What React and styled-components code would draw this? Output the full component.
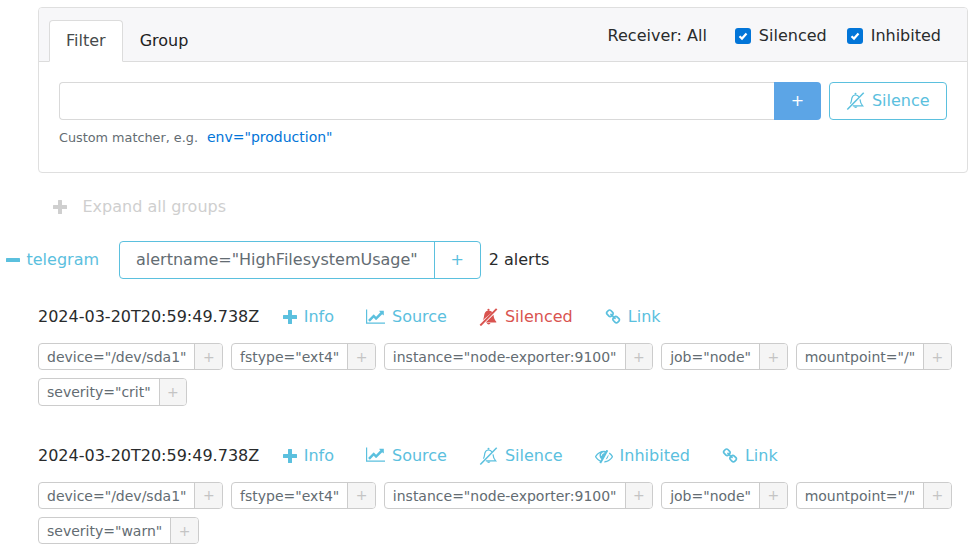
import React from 'react';
import styled, { createGlobalStyle } from 'styled-components';

const GlobalStyle = createGlobalStyle`
  html, body {
    margin: 0;
    padding: 0;
    background: #fff;
    font-family: "DejaVu Sans", sans-serif;
    font-size: 16px;
    line-height: 24px;
    color: #292b2c;
  }
`;

const PlusIcon = ({ size = 14 }) => (
  <svg width={size} height={size} viewBox="0 0 14 14" fill="currentColor">
    <path d="M5.6 0h2.8q.6 0 .6.6V5h4.4q.6 0 .6.6v2.8q0 .6-.6.6H9v4.4q0 .6-.6.6H5.6q-.6 0-.6-.6V9H.6Q0 9 0 8.4V5.6Q0 5 .6 5H5V.6q0-.6.6-.6z" />
  </svg>
);

const MinusIcon = () => (
  <svg width="14" height="14" viewBox="0 0 14 14" fill="currentColor">
    <rect x="0" y="5" width="14" height="4" rx="0.6" />
  </svg>
);

const LineChartIcon = () => (
  <svg width="19" height="17" viewBox="0 90 2048 1792" fill="currentColor">
    <path d="M2048 1536v128h-2048v-1536h128v1408h1920zm-128-1248v435q0 21-19.5 29.5t-35.5-7.5l-121-121-633 633q-10 10-23 10t-23-10l-233-233-416 416-192-192 585-585q10-10 23-10t23 10l233 233 464-464-121-121q-16-16-7.5-35.5t29.5-19.5h435q14 0 23 9t9 23z" />
  </svg>
);

const LinkIcon = () => (
  <svg width="16" height="16" viewBox="0 0 1792 1792" fill="currentColor">
    <path d="M1520 1216q0-40-28-68l-208-208q-28-28-68-28-42 0-72 32 3 3 19 18.5t21.5 21.5 15 19 13 25.5 3.5 27.5q0 40-28 68t-68 28q-15 0-27.5-3.5t-25.5-13-19-15-21.5-21.5-18.5-19q-33 31-33 73 0 40 28 68l206 207q27 27 68 27 40 0 68-26l147-146q28-28 28-67zm-703-705q0-40-28-68l-206-207q-28-28-68-28-39 0-68 27l-147 146q-28 28-28 67 0 40 28 68l208 208q27 27 68 27 42 0 72-31-3-3-19-18.5t-21.5-21.5-15-19-13-25.5-3.5-27.5q0-40 28-68t68-28q15 0 27.5 3.5t25.5 13 19 15 21.5 21.5 18.5 19q33-31 33-73zm895 705q0 120-85 203l-147 146q-83 83-203 83-121 0-204-85l-206-207q-83-83-83-203 0-123 88-209l-88-88q-86 88-208 88-120 0-204-84l-208-208q-84-84-84-204t85-203l147-146q83-83 203-83 121 0 204 85l206 207q83 83 83 203 0 123-88 209l88 88q86-88 208-88 120 0 204 84l208 208q84 84 84 204z" />
  </svg>
);

const EyeSlashIcon = () => (
  <svg width="18" height="18" viewBox="0 0 1792 1792" fill="currentColor">
    <path d="M555 1335l78-141q-87-63-136-159t-49-203q0-121 61-225-229 117-381 353 167 258 427 375zm389-759q0-20-14-34t-34-14q-125 0-214.5 89.5t-89.5 214.5q0 20 14 34t34 14 34-14 14-34q0-86 61-147t147-61q20 0 34-14t14-34zm363-191q0 7-1 9-106 189-316 567t-315 566l-49 89q-10 16-28 16-12 0-134-70-16-10-16-28 0-12 44-87-143-65-263.5-173t-208.5-245q-20-31-20-69t20-69q153-235 380-371t496-136q89 0 180 17l54-97q10-16 28-16 5 0 18 6t31 15.5 33 19.5 31.5 18.5 19.5 11.5q16 10 16 27zm37 447q0 139-79 253.5t-209 164.5l280-502q8 45 8 84zm448 128q0 35-20 69-39 64-109 145-150 172-347.5 267t-419.5 95l74-132q212-18 392.5-137t301.5-307q-115-179-282-294l63-112q95 64 182.5 153t144.5 184q20 34 20 69z" />
  </svg>
);

const BellSlashOutline = () => (
  <svg width="19" height="18" viewBox="0 0 18 18" fill="none" stroke="currentColor">
    <path strokeWidth="1.2" d="M3.9 11.6C5.2 9.8 4.8 7.8 5.5 5.8 6.1 4 7.6 3 9 3c1.3 0 2.6.6 3.4 1.8" />
    <path strokeWidth="1.2" d="M13.5 7.4c.2 2.6 1 4.7 2.7 6.5H6.3" />
    <path strokeWidth="1.5" d="M.8 17.5 17.2.8" />
    <path fill="currentColor" stroke="none" d="M7.3 14.5H11a1.900 1.900 0 0 1-3.700 0z" />
    <circle cx="9" cy="1.800" r="1" fill="currentColor" stroke="none" />
  </svg>
);

const BellSlashSolid = () => (
  <svg width="19" height="18" viewBox="0 0 18 18" fill="currentColor">
    <path d="M3.2 12.2C4.800 10 4.300 7.800 5.100 5.600 5.800 3.700 7.400 2.500 9 2.500c1.500 0 2.900.7 3.800 1.800z" />
    <path d="M14 6.800c.2 2.700 1 5 2.800 6.900v.8H6.200z" />
    <path d="M7.300 15H11a1.900 1.900 0 0 1-3.700 0z" />
    <circle cx="9" cy="1.800" r="1.100" />
    <path stroke="currentColor" strokeWidth="1.900" d="M.8 17.500 17.200.8" />
  </svg>
);

const CheckMark = () => (
  <svg width="10" height="10" viewBox="0 0 10 10" fill="none" stroke="#fff" strokeWidth="2.200">
    <path d="M1.500 5.200 4 7.600 8.500 2.600" />
  </svg>
);

const Page = styled.div`
  width: 974px;
  height: 560px;
  overflow: hidden;
  padding: 7px 6px 0 38px;
  box-sizing: border-box;
`;

const Card = styled.div`
  border: 1px solid #dfdfdf;
  border-radius: 4px;
  height: 166px;
  box-sizing: border-box;
`;

const CardHeader = styled.div`
  display: flex;
  align-items: flex-end;
  justify-content: space-between;
  height: 54px;
  box-sizing: border-box;
  padding: 0 26px 0 10px;
  background: #f7f7f9;
  border-bottom: 1px solid #dcdcdc;
  border-radius: 3px 3px 0 0;
`;

const Tabs = styled.div`
  display: flex;
  margin-bottom: -1px;
`;

const Tab = styled.div`
  padding: 8px 16px;
  height: 42px;
  box-sizing: border-box;
  border: 1px solid ${p => (p.$active ? '#dcdcdc' : 'transparent')};
  border-bottom-color: ${p => (p.$active ? '#fff' : 'transparent')};
  border-radius: 4px 4px 0 0;
  background: ${p => (p.$active ? '#fff' : 'transparent')};
  color: ${p => (p.$active ? '#464a4c' : '#1e2122')};
`;

const HeaderRight = styled.div`
  display: flex;
  align-items: center;
  align-self: flex-start;
  margin-top: 16px;
  color: #292b2c;
`;

const Receiver = styled.span`
  margin-right: 28px;
`;

const Check = styled.label`
  display: flex;
  align-items: center;
  margin-left: ${p => (p.$first ? '0' : '20px')};
`;

const CheckBox = styled.span`
  display: inline-flex;
  align-items: center;
  justify-content: center;
  width: 16px;
  height: 16px;
  margin-right: 8px;
  border-radius: 3px;
  background: #0275d8;
`;

const CardBody = styled.div`
  padding: 20px;
`;

const FilterRow = styled.div`
  display: flex;
`;

const FilterInput = styled.div`
  width: 715px;
  height: 38px;
  box-sizing: border-box;
  border: 1px solid #d9d9d9;
  border-right: 0;
  border-radius: 4px 0 0 4px;
`;

const AddButton = styled.div`
  display: flex;
  align-items: center;
  justify-content: center;
  width: 47px;
  height: 38px;
  border-radius: 0 4px 4px 0;
  background: #5ca5e6;
  color: #fff;
  font-size: 16px;
`;

const SilenceButton = styled.div`
  display: flex;
  align-items: center;
  justify-content: center;
  gap: 6.5px;
  width: 118px;
  height: 38px;
  margin-left: 8px;
  box-sizing: border-box;
  border: 1px solid #5bc0de;
  border-radius: 4px;
  color: #5bc0de;
`;

const Helper = styled.div`
  margin-top: 5px;
  font-size: 12.8px;
  line-height: 24px;
  color: #636c72;
`;

const HelperLink = styled.span`
  margin-left: 9px;
  font-size: 14px;
  color: #0275d8;
`;

const ExpandAll = styled.div`
  display: flex;
  align-items: center;
  gap: 15.5px;
  margin: 22px 0 0 15px;
  color: #cfcfcf;
`;

const GroupRow = styled.div`
  display: flex;
  align-items: center;
  margin: 22px 0 0 -32px;
`;

const GroupName = styled.div`
  display: flex;
  align-items: center;
  gap: 6.5px;
  width: 113px;
  color: #5bc0de;
`;

const GroupFilter = styled.div`
  display: flex;
  height: 38px;
  box-sizing: border-box;
  border: 1px solid #5bc0de;
  border-radius: 4px;
  color: #636c72;
  line-height: 36px;
`;

const GroupLabel = styled.span`
  padding: 0 16px;
  border-right: 1px solid #5bc0de;
`;

const GroupPlus = styled.span`
  display: flex;
  align-items: center;
  justify-content: center;
  width: 45px;
  color: #5bc0de;
  font-size: 16px;
`;

const AlertCount = styled.span`
  margin-left: 8px;
`;

const Alert = styled.div`
  margin-top: ${p => (p.$first ? '26px' : '37.8px')};
`;

const AlertHead = styled.div`
  display: flex;
  align-items: center;
  height: 24px;
`;

const Timestamp = styled.span`
  margin-right: 12px;
`;

const Action = styled.span`
  display: flex;
  align-items: center;
  gap: 6.5px;
  padding: 0 12.5px 0 12px;
  margin-right: 8px;
  color: ${p => (p.$danger ? '#d9534f' : '#5bc0de')};
`;

const Labels = styled.div`
  display: flex;
  flex-wrap: wrap;
  gap: 8px;
  margin-top: 14px;
`;

const Label = styled.div`
  display: flex;
  height: 27.4px;
  box-sizing: border-box;
  border: 1px solid #ccc;
  border-radius: 4px;
  font-size: 14px;
  line-height: 26px;
  color: #636c72;
`;

const LabelText = styled.span`
  padding: 0 8px;
`;

const LabelPlus = styled.span`
  display: flex;
  align-items: center;
  justify-content: center;
  width: 26.6px;
  border-left: 1px solid #ccc;
  border-radius: 0 3px 3px 0;
  background: #f5f5f5;
  color: #c4c4c4;
  font-size: 14px;
`;

const commonLabels = [
  'device="/dev/sda1"',
  'fstype="ext4"',
  'instance="node-exporter:9100"',
  'job="node"',
  'mountpoint="/"',
];

function AlertItem({ first, silenced, inhibited, severity }) {
  return (
    <Alert $first={first}>
      <AlertHead>
        <Timestamp>2024-03-20T20:59:49.738Z</Timestamp>
        <Action><PlusIcon />Info</Action>
        <Action><LineChartIcon />Source</Action>
        {silenced ? (
          <Action $danger><BellSlashSolid />Silenced</Action>
        ) : (
          <Action><BellSlashOutline />Silence</Action>
        )}
        {inhibited && <Action><EyeSlashIcon />Inhibited</Action>}
        <Action><LinkIcon />Link</Action>
      </AlertHead>
      <Labels>
        {[...commonLabels, `severity="${severity}"`].map(text => (
          <Label key={text}>
            <LabelText>{text}</LabelText>
            <LabelPlus>+</LabelPlus>
          </Label>
        ))}
      </Labels>
    </Alert>
  );
}

export default function App() {
  return (
    <Page>
      <GlobalStyle />
      <Card>
        <CardHeader>
          <Tabs>
            <Tab $active>Filter</Tab>
            <Tab>Group</Tab>
          </Tabs>
          <HeaderRight>
            <Receiver>Receiver: All</Receiver>
            <Check $first><CheckBox><CheckMark /></CheckBox>Silenced</Check>
            <Check><CheckBox><CheckMark /></CheckBox>Inhibited</Check>
          </HeaderRight>
        </CardHeader>
        <CardBody>
          <FilterRow>
            <FilterInput />
            <AddButton>+</AddButton>
            <SilenceButton><BellSlashOutline />Silence</SilenceButton>
          </FilterRow>
          <Helper>
            Custom matcher, e.g.
            <HelperLink>env="production"</HelperLink>
          </Helper>
        </CardBody>
      </Card>
      <ExpandAll><PlusIcon />Expand all groups</ExpandAll>
      <GroupRow>
        <GroupName><MinusIcon />telegram</GroupName>
        <GroupFilter>
          <GroupLabel>alertname="HighFilesystemUsage"</GroupLabel>
          <GroupPlus>+</GroupPlus>
        </GroupFilter>
        <AlertCount>2 alerts</AlertCount>
      </GroupRow>
      <AlertItem first silenced severity="crit" />
      <AlertItem inhibited severity="warn" />
    </Page>
  );
}
